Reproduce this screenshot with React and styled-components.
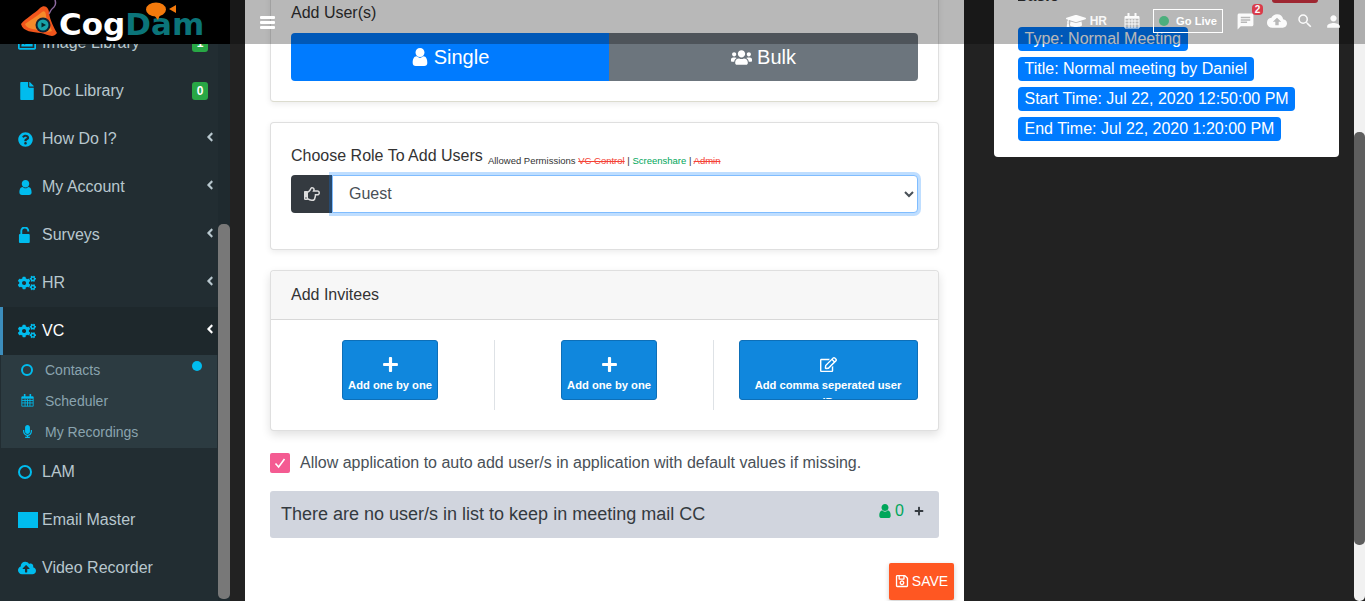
import React from "react";
import styled, { createGlobalStyle } from "styled-components";
import {
	FaAngleLeft, FaCloudUploadAlt, FaCogs, FaFile, FaGraduationCap,
	FaMicrophone, FaPlus, FaQuestionCircle, FaRegEdit, FaRegHandPointRight, FaRegImage,
	FaRegSave, FaUsers,
} from "react-icons/fa";
import { MdChat, MdCloudUpload, MdPerson, MdSearch } from "react-icons/md";

const GlobalStyle = createGlobalStyle`
	html, body {
		margin: 0;
		height: 100%;
		overflow: hidden;
		background: #222;
		font-family: "Liberation Sans", Arial, sans-serif;
	}
	* { box-sizing: border-box; }
`;

const Page = styled.div`
	display: flex;
	height: 601px;
	position: relative;
	overflow: hidden;
	background: #222;
`;

/* top bar lies over the scrolled page */
const TopBar = styled.header`
	position: absolute;
	top: 0;
	left: 0;
	right: 0;
	height: 44px;
	display: flex;
	align-items: center;
	background: rgba(0, 0, 0, 0.28);
	z-index: 10;
`;

const LogoBox = styled.div`
	width: 230px;
	height: 44px;
	background: #000;
	position: relative;
	display: flex;
	align-items: center;
	padding-left: 59px;
	flex: none;
`;

const LogoMark = styled.svg`
	position: absolute;
	left: 18px;
	top: 0;
`;

const LogoFish = styled.svg`
	position: absolute;
	left: 145px;
	top: 2px;
`;

const LogoText = styled.span`
	font-family: "DejaVu Sans", sans-serif;
	font-weight: 700;
	font-size: 31px;
	color: #fff;
	position: relative;
	top: 2px;

	& b { color: #0b7479; font-weight: 700; }
`;

const Burger = styled.div`
	margin-left: 30px;
	width: 15px;
	display: flex;
	flex-direction: column;
	gap: 2px;

	& i { display: block; height: 3px; background: #fff; border-radius: 1px; }
`;

const TopIcons = styled.div`
	margin-left: auto;
	padding: 0 22px 2px 0;
	display: flex;
	align-items: center;
	color: #fff;
	font-size: 12px;
	font-weight: 700;
`;

const TopIcon = styled.span`
	display: flex;
	align-items: center;
	position: relative;
	margin-left: ${(p) => p.$gap || 0}px;
	font-size: ${(p) => p.$size || 18}px;
	opacity: 0.95;
`;

const HrLabel = styled.span`
	font-size: 12px;
	margin-left: 4px;
	opacity: 0.9;
`;

const GoLive = styled.div`
	margin-left: 13px;
	width: 70px;
	height: 24px;
	border: 1px solid #fff;
	display: flex;
	align-items: center;
	padding-left: 5px;
	gap: 7px;
	font-size: 11.2px;

	& i { width: 10px; height: 10px; border-radius: 50%; background: #4caf7d; }
`;

const ChatBadge = styled.span`
	position: absolute;
	top: -8px;
	right: -8px;
	width: 11px;
	height: 11px;
	border-radius: 4px;
	background: #dc3545;
	color: #fff;
	font-size: 10px;
	line-height: 11px;
	text-align: center;
`;

const Sidebar = styled.aside`
	width: 230px;
	flex: none;
	display: flex;
	background: #222d32;
`;

const Menu = styled.nav`
	width: 218px;
	padding-top: 19px;
	flex: none;
`;

const MenuItem = styled.div`
	height: 48px;
	display: flex;
	align-items: center;
	position: relative;
	padding-left: ${(p) => (p.$active ? 15 : 18)}px;
	font-size: 16px;
	color: ${(p) => (p.$active ? "#fff" : "#b8c7ce")};
	background: ${(p) => (p.$active ? "#1e282c" : "transparent")};
	border-left: ${(p) => (p.$active ? "3px solid #3c8dbc" : "none")};
`;

const MenuIcon = styled.span`
	width: 24px;
	flex: none;
	display: flex;
	align-items: center;
	color: #00bcee;
	font-size: ${(p) => p.$size || 15}px;
`;

const Ring = styled.i`
	display: block;
	width: ${(p) => p.$size}px;
	height: ${(p) => p.$size}px;
	border: 2.5px solid #00bcee;
	border-radius: 50%;
`;

const MailBlock = styled.i`
	display: block;
	width: 20px;
	height: 16px;
	background: #00bcee;
`;

const CountBadge = styled.span`
	margin-left: auto;
	margin-right: 10px;
	width: 16px;
	height: 18px;
	border-radius: 3px;
	background: #28a745;
	color: #fff;
	font-size: 12px;
	font-weight: 700;
	line-height: 18px;
	text-align: center;
`;

const Chevron = styled(FaAngleLeft)`
	margin-left: auto;
	margin-right: 1px;
	margin-top: -4px;
	font-size: 14px;
	color: ${(p) => (p.$active ? "#fff" : "#b8c7ce")};
`;

const SubMenu = styled.div`
	margin: 0 1px;
	height: 93px;
	background: #2c3b41;
	position: relative;
`;

const SubItem = styled.div`
	height: 31px;
	display: flex;
	align-items: center;
	padding: 0 0 2px 20px;
	font-size: 14px;
	color: #8aa4af;
`;

const SubIcon = styled.span`
	width: 24px;
	flex: none;
	display: flex;
	align-items: center;
	color: #00bcee;
	font-size: 13px;
`;

const Dot = styled.i`
	position: absolute;
	left: 191px;
	top: 6px;
	width: 10px;
	height: 10px;
	border-radius: 50%;
	background: #00bcee;
`;

const SideTrack = styled.div`
	width: 12px;
	flex: none;
	padding-top: 224px;
	padding-bottom: 2px;
	background: #1f2a2f;
`;

const SideThumb = styled.div`
	height: 100%;
	background: #787878;
	border-radius: 5px;
`;

const Main = styled.main`
	width: 719px;
	margin-left: 15px;
	flex: none;
	background: #fff;
	padding: 0 25px;
	position: relative;
`;

const Card = styled.section`
	width: 669px;
	background: #fff;
	border: 1px solid rgba(0, 0, 0, 0.125);
	border-radius: 4px;
	box-shadow: 0 2px 6px rgba(0, 0, 0, 0.08);
	margin-bottom: 20px;
`;

const UsersCard = styled(Card)`
	margin-top: -20px;
	height: 122px;
	padding: 23px 20px 0;
	border-bottom-color: #dcdccf;
`;

const CardTitle = styled.div`
	font-size: 16px;
	line-height: 18px;
	color: #333;
`;

const Toggle = styled.div`
	display: flex;
	height: 48px;
	margin-top: 11px;
	width: 627px;
	border-radius: 4px;
	overflow: hidden;
`;

const ToggleButton = styled.div`
	flex: ${(p) => (p.$on ? "0 0 318px" : "1")};
	display: flex;
	align-items: center;
	justify-content: center;
	gap: 5px;
	color: #fff;
	font-size: 20px;
	background: ${(p) => (p.$on ? "#007bff" : "#6c757d")};
`;

const RoleCard = styled(Card)`
	height: 128px;
	padding: 23px 20px 0;
`;

const RoleLabel = styled.div`
	height: 20px;
	font-size: 16px;
	line-height: 20px;
	color: #333;
	white-space: nowrap;

	& small { font-size: 9.5px; margin-left: 3px; color: #333; vertical-align: -3px; }
	& s { color: #f44336; }
	& em { color: #00a65a; font-style: normal; }
`;

const InputGroup = styled.div`
	display: flex;
	height: 38px;
	margin-top: 9px;
	width: 627px;
`;

const Prepend = styled.span`
	width: 41px;
	flex: none;
	display: flex;
	align-items: center;
	justify-content: center;
	background: #343a40;
	color: #ddd;
	font-size: 16px;
	border-radius: 4px 0 0 4px;
`;

const RoleSelect = styled.select`
	flex: 1;
	height: 38px;
	padding: 0 12px 2px;
	font: 16px "Liberation Sans", Arial, sans-serif;
	color: #495057;
	background: #fff;
	border: 1px solid #80bdff;
	border-radius: 0 4px 4px 0;
	box-shadow: 0 0 0 3px rgba(0, 123, 255, 0.25);
	outline: none;
`;

const InviteCard = styled(Card)`
	height: 161px;
	margin-bottom: 0;
	box-shadow: 0 4px 10px rgba(0, 0, 0, 0.12);
`;

const InviteHead = styled.div`
	height: 49px;
	padding-left: 20px;
	display: flex;
	align-items: center;
	background: #f7f7f7;
	border-bottom: 1px solid rgba(0, 0, 0, 0.125);
	font-size: 16px;
	color: #333;
	border-radius: 4px 4px 0 0;
`;

const InviteGrid = styled.div`
	display: grid;
	grid-template-columns: repeat(3, 219px);
	padding: 20px 0 0 9.5px;
`;

const InviteCol = styled.div`
	height: 70px;
	position: relative;
	display: flex;
	justify-content: center;
	align-items: flex-start;

	&:not(:last-child)::after {
		content: "";
		position: absolute;
		right: 5px;
		top: 0;
		bottom: 0;
		width: 1px;
		background: #dee2e6;
	}
`;

const InviteButton = styled.div`
	width: ${(p) => (p.$wide ? 179 : 96)}px;
	height: 60px;
	overflow: hidden;
	background: #1087dd;
	border: 1px solid #0d6fb8;
	border-radius: 3px;
	color: #fff;
	font-size: 11.2px;
	font-weight: 700;
	line-height: 17px;
	text-align: center;
	padding: 15px ${(p) => (p.$wide ? 12 : 2)}px 0;

	& svg { display: block; margin: 0 auto 4px; font-size: 17px; }
`;

const CheckRow = styled.div`
	display: flex;
	align-items: center;
	gap: 10px;
	margin-top: 22px;
	font-size: 16px;
	color: #495057;
	height: 20px;
`;

const CheckBox = styled.span`
	width: 20px;
	height: 20px;
	flex: none;
	border-radius: 2px;
	background: #f45b92;
	display: flex;
	align-items: center;
	justify-content: center;
`;

const CcBar = styled.div`
	margin-top: 18px;
	width: 669px;
	height: 47px;
	background: #d1d5de;
	border-radius: 3px;
	display: flex;
	align-items: center;
	padding: 0 15px 0 11px;
	font-size: 18px;
	color: #343a40;
`;

const CcCount = styled.span`
	margin-left: auto;
	display: flex;
	align-items: center;
	font-size: 16px;
	color: #00a65a;
	margin-top: -7px;

	& svg:first-child { font-size: 14px; margin-right: 3px; }
	& svg:last-child { font-size: 10px; margin-left: 10px; color: #343a40; }
`;

const SaveRow = styled.div`
	display: flex;
	justify-content: flex-end;
	margin: 25px -15px 0 0;
`;

const SaveButton = styled.div`
	width: 65px;
	height: 37px;
	background: #ff5722;
	color: #fff;
	font-size: 14px;
	border-radius: 2px;
	box-shadow: 0 2px 5px rgba(0, 0, 0, 0.2);
	display: flex;
	align-items: center;
	justify-content: center;
	gap: 3px;
	padding-bottom: 1px;

	& svg { font-size: 14px; }
`;

const RightPane = styled.div`
	flex: 1;
	padding-left: 30px;
`;

const InfoCard = styled.section`
	width: 345px;
	height: 157px;
	background: #fff;
	border-radius: 0 0 4px 4px;
	padding: 0 21px 0 24px;
`;

/* heading row scrolled off the top, only its last pixels still show */
const InfoHead = styled.div`
	height: 3px;
	overflow: hidden;
	display: flex;
	justify-content: space-between;
	align-items: flex-end;
`;

const InfoName = styled.span`
	margin-left: -2px;
	font-size: 16px;
	font-weight: 700;
	line-height: 14px;
	color: #333;
`;

const InfoStatus = styled.span`
	width: 46px;
	height: 3px;
	background: #dc3545;
	border-radius: 0 0 4px 4px;
`;

const InfoBadges = styled.div`
	display: flex;
	flex-direction: column;
	align-items: flex-start;
	gap: 6px;
	padding-top: 24px;
`;

const InfoBadge = styled.span`
	height: 24px;
	padding: 0 6.5px;
	background: #007bff;
	color: #fff;
	font-size: 16px;
	line-height: 24px;
	border-radius: 4px;
	white-space: nowrap;
`;

const RightTrack = styled.div`
	width: 11px;
	flex: none;
	padding-top: 132px;
	padding-bottom: 56px;
	background: #f1f1f1;
	border-radius: 0 0 5px 5px;
`;

const RightThumb = styled.div`
	height: 100%;
	background: #5e5e5e;
	border-radius: 5px;
`;

const UserIcon = ({ size, ...rest }) => (
	<svg width={size || "1em"} height={size || "1em"} viewBox="0 0 1408 1536" fill="currentColor" {...rest}>
		<path d="M1328 1277C1328 1440 1230 1536 1061 1536H347C178 1536 80 1440 80 1277C80 1000 150 704 426 704C450 704 560 843 704 843C848 843 958 704 982 704C1258 704 1328 1000 1328 1277ZM1088 384C1088 596 916 768 704 768C492 768 320 596 320 384C320 172 492 0 704 0C916 0 1088 172 1088 384Z" />
	</svg>
);

const CalendarIcon = () => (
	<svg width="1em" height="1em" viewBox="0 0 16 16" fill="none" stroke="currentColor" strokeWidth="1">
		<path d="M1 3.5H15V15H1Z" />
		<path d="M1 4.5H15" strokeWidth="2.5" />
		<path d="M1 8H15M1 11H15M5 6V15M8 6V15M11 6V15" />
		<path d="M4.5 0.5V3.5M11.5 0.5V3.5" strokeWidth="2" strokeLinecap="round" />
	</svg>
);

const UnlockIcon = () => (
	<svg width="1em" height="1em" viewBox="0 0 15 17" fill="currentColor">
		<rect x="0" y="7.5" width="11.5" height="9.5" rx="1" />
		<path d="M2.5 8V4.2a3.7 3.7 0 0 1 7.4 0V4.8" fill="none" stroke="currentColor" strokeWidth="2" />
	</svg>
);

const CheckMark = () => (
	<svg width="12" height="12" viewBox="0 0 12 12" fill="none" stroke="#fff" strokeWidth="1.6">
		<path d="M1.5 6.5L4.6 10L10.5 2" />
	</svg>
);

const menu = [
	{ label: "Image Library", icon: <FaRegImage />, size: 18, count: 1 },
	{ label: "Doc Library", icon: <FaFile />, size: 18, count: 0 },
	{ label: "How Do I?", icon: <FaQuestionCircle />, arrow: true },
	{ label: "My Account", icon: <UserIcon />, arrow: true },
	{ label: "Surveys", icon: <UnlockIcon />, size: 16, arrow: true },
	{ label: "HR", icon: <FaCogs />, size: 18, arrow: true },
];

const infos = [
	"Type: Normal Meeting",
	"Title: Normal meeting by Daniel",
	"Start Time: Jul 22, 2020 12:50:00 PM",
	"End Time: Jul 22, 2020 1:20:00 PM",
];

const App = () => {
	return (
		<Page>
			<GlobalStyle />

			<TopBar>
				<LogoBox>
					<LogoMark width="44" height="44" viewBox="0 0 44 44">
						<path d="M3 24 C8 18 16 14 22 8 C27 4 31 8 31 13 C32 20 36 28 39 33 C35 39 29 34 23 33 C15 32 5 32 3 24 Z" fill="#f0561c" />
						<path d="M7 24 C12 20 18 17 24 12 C27 10 28 13 28 16 C29 22 33 28 34 31 C30 33 25 30 20 30 C14 29 8 28 7 24 Z" fill="#f58a2a" />
						<circle cx="25" cy="25" r="7.5" fill="#123" />
						<circle cx="25" cy="25" r="5.5" fill="#17a2a8" />
						<path d="M23.5 22.5 L28 25 L23.5 27.5 Z" fill="#06252a" />
						<path d="M37 0 C38 3 38 5 36 7 C33 9 32 12 31 14" fill="none" stroke="#8d6aa0" strokeWidth="1.5" />
					</LogoMark>
					<LogoText>Cog<b>Dam</b></LogoText>
					<LogoFish width="32" height="18" viewBox="0 0 32 18">
						<ellipse cx="11" cy="7.5" rx="10" ry="7" fill="#f47a0c" />
						<path d="M9 13 L13 18 L15 13 Z" fill="#f47a0c" />
						<path d="M31 3 L31 11 L24 7 Z" fill="#f47a0c" />
					</LogoFish>
				</LogoBox>
				<Burger><i /><i /><i /></Burger>
				<TopIcons>
					<TopIcon $size={20}><FaGraduationCap /></TopIcon>
					<HrLabel>HR</HrLabel>
					<TopIcon $size={16} $gap={17}><CalendarIcon /></TopIcon>
					<GoLive><i />Go Live</GoLive>
					<TopIcon $size={19} $gap={13}><MdChat /><ChatBadge>2</ChatBadge></TopIcon>
					<TopIcon $size={20} $gap={12}><MdCloudUpload /></TopIcon>
					<TopIcon $size={18} $gap={9}><MdSearch /></TopIcon>
					<TopIcon $size={19} $gap={10}><MdPerson /></TopIcon>
				</TopIcons>
			</TopBar>

			<Sidebar>
				<Menu>
					{menu.map((m) => (
						<MenuItem key={m.label}>
							<MenuIcon $size={m.size}>{m.icon}</MenuIcon>
							{m.label}
							{m.arrow && <Chevron />}
							{m.count !== undefined && <CountBadge>{m.count}</CountBadge>}
						</MenuItem>
					))}
					<MenuItem $active>
						<MenuIcon $size={18}><FaCogs /></MenuIcon>
						VC
						<Chevron $active />
					</MenuItem>
					<SubMenu>
						<Dot />
						<SubItem><SubIcon><Ring $size={12} /></SubIcon>Contacts</SubItem>
						<SubItem><SubIcon><CalendarIcon /></SubIcon>Scheduler</SubItem>
						<SubItem><SubIcon><FaMicrophone /></SubIcon>My Recordings</SubItem>
					</SubMenu>
					<MenuItem><MenuIcon><Ring $size={14} /></MenuIcon>LAM</MenuItem>
					<MenuItem><MenuIcon><MailBlock /></MenuIcon>Email Master</MenuItem>
					<MenuItem><MenuIcon $size={18}><FaCloudUploadAlt /></MenuIcon>Video Recorder</MenuItem>
				</Menu>
				<SideTrack><SideThumb /></SideTrack>
			</Sidebar>

			<Main>
				<UsersCard>
					<CardTitle>Add User(s)</CardTitle>
					<Toggle>
						<ToggleButton $on><UserIcon size={18} />Single</ToggleButton>
						<ToggleButton><FaUsers size={21} />Bulk</ToggleButton>
					</Toggle>
				</UsersCard>

				<RoleCard>
					<RoleLabel>
						Choose Role To Add Users
						<small> Allowed Permissions <s>VC Control</s> | <em>Screenshare</em> | <s>Admin</s></small>
					</RoleLabel>
					<InputGroup>
						<Prepend><FaRegHandPointRight /></Prepend>
						<RoleSelect defaultValue="Guest">
							<option>Guest</option>
						</RoleSelect>
					</InputGroup>
				</RoleCard>

				<InviteCard>
					<InviteHead>Add Invitees</InviteHead>
					<InviteGrid>
						<InviteCol><InviteButton><FaPlus />Add one by one</InviteButton></InviteCol>
						<InviteCol><InviteButton><FaPlus />Add one by one</InviteButton></InviteCol>
						<InviteCol><InviteButton $wide><FaRegEdit />Add comma seperated user ID</InviteButton></InviteCol>
					</InviteGrid>
				</InviteCard>

				<CheckRow>
					<CheckBox><CheckMark /></CheckBox>
					Allow application to auto add user/s in application with default values if missing.
				</CheckRow>

				<CcBar>
					There are no user/s in list to keep in meeting mail CC
					<CcCount><UserIcon />0<FaPlus /></CcCount>
				</CcBar>

				<SaveRow>
					<SaveButton><FaRegSave />SAVE</SaveButton>
				</SaveRow>
			</Main>

			<RightPane>
				<InfoCard>
					<InfoHead>
						<InfoName>Basic</InfoName>
						<InfoStatus />
					</InfoHead>
					<InfoBadges>
						{infos.map((t) => <InfoBadge key={t}>{t}</InfoBadge>)}
					</InfoBadges>
				</InfoCard>
			</RightPane>
			<RightTrack><RightThumb /></RightTrack>
		</Page>
	);
};

export default App;
